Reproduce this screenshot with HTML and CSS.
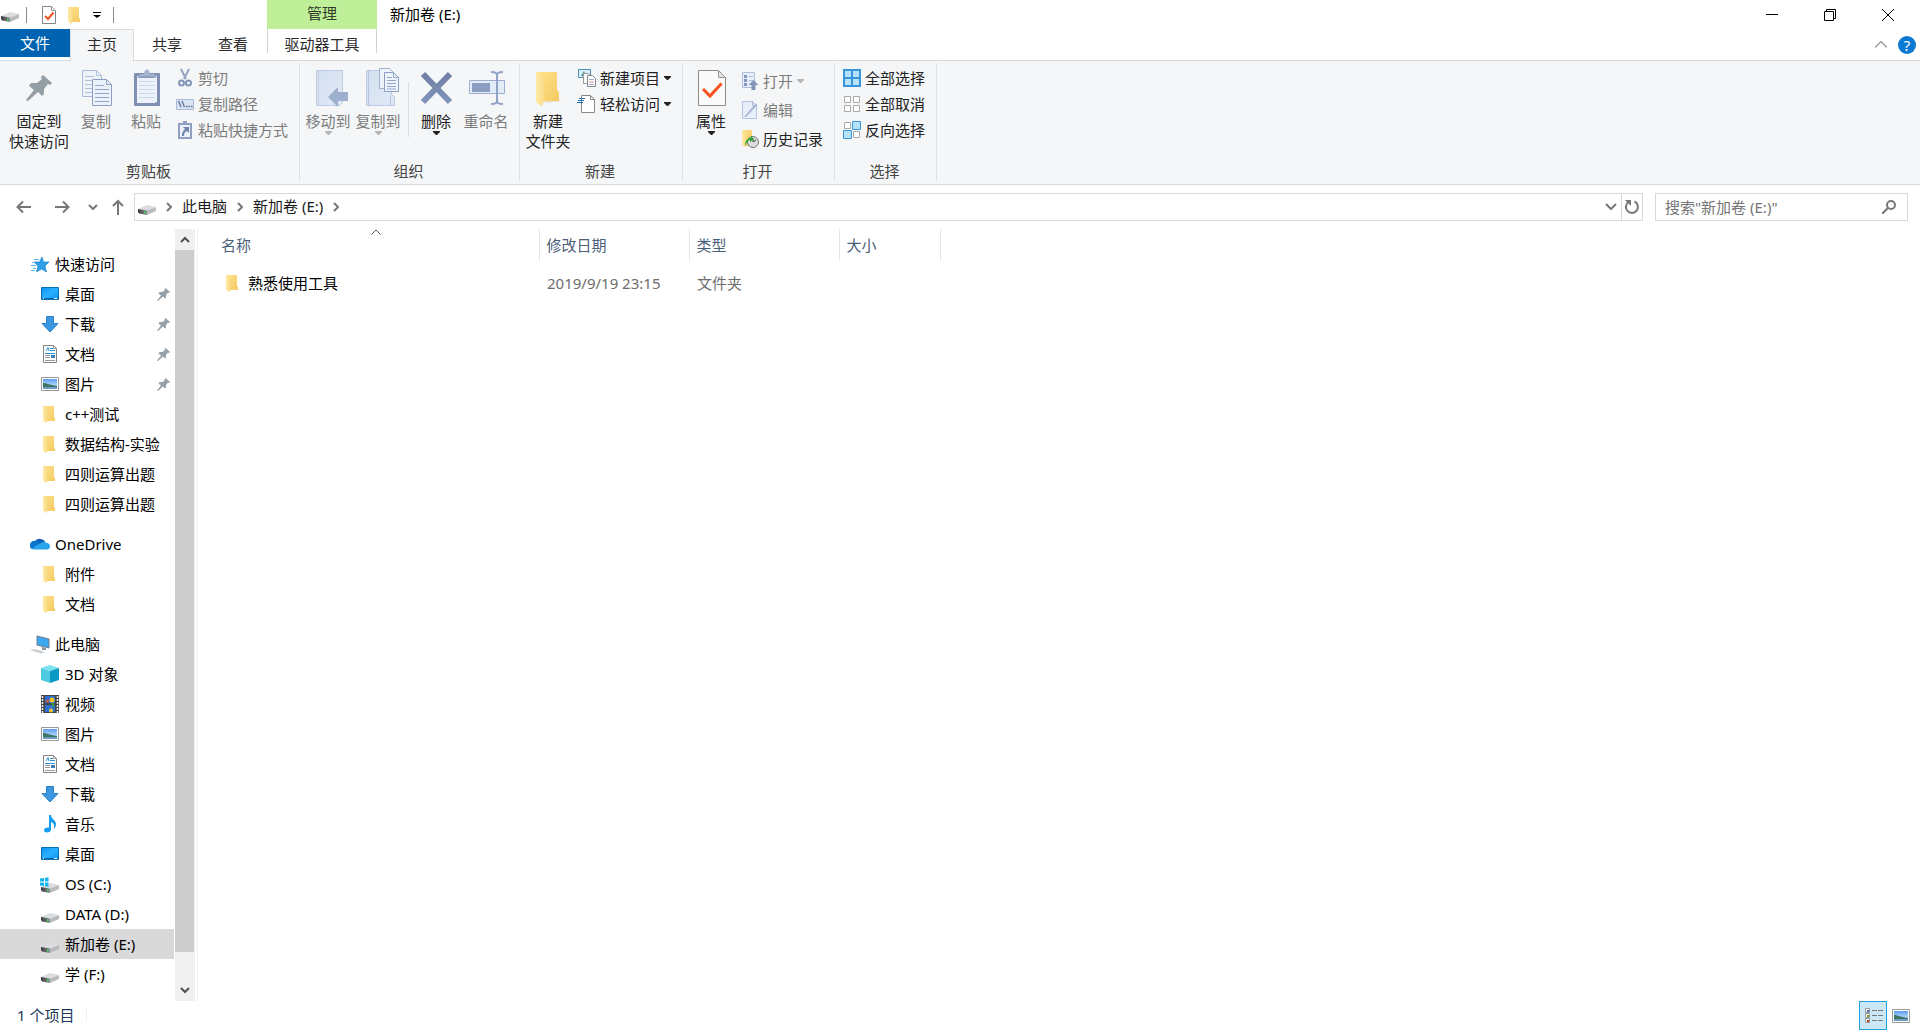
FILE: index.html
```html
<!DOCTYPE html>
<html lang="zh-CN">
<head>
<meta charset="utf-8">
<title>新加卷 (E:)</title>
<link rel="stylesheet" href="styles.css">
</head>
<body>
<svg class="defs" aria-hidden="true">
  <defs>
    <linearGradient id="g-folder" x1="0" y1="0" x2="1" y2="1"><stop offset="0" stop-color="#ffe08a"/><stop offset="1" stop-color="#f3cb62"/></linearGradient>
    <linearGradient id="g-flap" x1="0" y1="0" x2="1" y2="0"><stop offset="0" stop-color="#ffeaa5"/><stop offset="1" stop-color="#f9dc88"/></linearGradient>
    <linearGradient id="g-desk" x1="0" y1="0" x2="1" y2="1"><stop offset="0" stop-color="#0f95f5"/><stop offset=".5" stop-color="#2bb0ff"/><stop offset="1" stop-color="#0a95f8"/></linearGradient>
    <linearGradient id="g-drive" x1="0" y1="0" x2="1" y2="0"><stop offset="0" stop-color="#3a3a3c"/><stop offset="1" stop-color="#8d8f92"/></linearGradient>
    <linearGradient id="g-x" x1="0" y1="0" x2="0" y2="1"><stop offset="0" stop-color="#6f80a4"/><stop offset="1" stop-color="#8093b8"/></linearGradient>
    <linearGradient id="g-pale" x1="0" y1="0" x2="1" y2="1"><stop offset="0" stop-color="#d4e0f0"/><stop offset="1" stop-color="#e0e9f6"/></linearGradient>
    <linearGradient id="g-sky" x1="0" y1="0" x2="0" y2="1"><stop offset="0" stop-color="#5b9df0"/><stop offset="1" stop-color="#e4f3fb"/></linearGradient>
  </defs>
  <symbol id="i-drive" viewBox="0 0 18 18">
    <path d="M0 12 9 8l9 2-9 3.500z" fill="#dcdde0"/><path d="M0 12l9 1.500V18l-8-1.500L0 15z" fill="url(#g-drive)"/><path d="M9 13.500l9-3.500v4l-9 4z" fill="#b9bbbf"/><path d="M6 14.500h1.500v2H6z" fill="#2fe04a"/>
  </symbol>
  <symbol id="i-osdrive" viewBox="0 0 18 18">
    <path d="M0 12 9 8l9 2-9 3.500z" fill="#dcdde0"/><path d="M0 12l9 1.500V18l-8-1.500L0 15z" fill="url(#g-drive)"/><path d="M9 13.500l9-3.500v4l-9 4z" fill="#b9bbbf"/>
    <path d="M-1 3.500 3 3v3.500h-4zM4 2.800 7.500 2.300v4.200H4zM-1 7.500h4V11l-4-.5zM4 7.500h3.500v4.200L4 11.200z" fill="#12b7f0"/><path d="M6 14.500h1.500v2H6z" fill="#2fe04a"/>
  </symbol>
  <symbol id="i-folder" viewBox="0 0 18 18">
    <path d="M3 1h10v11l1 1v3H5z" fill="url(#g-folder)"/><path d="M2 1h1l3 2.500V18l-4-2z" fill="url(#g-flap)"/>
  </symbol>
  <symbol id="i-folder-lg" viewBox="0 0 36 38">
    <path d="M14 31h15l3 1-17 2z" fill="#e6e2d6"/><path d="M8 3h19v18l2 2v9H11z" fill="url(#g-folder)"/><path d="M6 3h1l7 5.500V31l-2 6.500-6-4.500z" fill="url(#g-flap)"/>
  </symbol>
  <symbol id="i-check" viewBox="0 0 18 18">
    <path d="M2.500.5h9l4 4v13h-13z" fill="#fff" stroke="#858585"/><path d="M11.500.5v4h4" fill="#eee" stroke="#999"/><path d="M5 10l3 3 5.500-6.500" fill="none" stroke="#f4511e" stroke-width="2"/>
  </symbol>
  <symbol id="i-props" viewBox="0 0 36 38">
    <path d="M5.500 1.500h20l7 7v28h-27z" fill="#fafafa" stroke="#8c8c8c"/><path d="M25.500 1.500v7h7z" fill="#e2e2e2" stroke="#9a9a9a"/><path d="M10 20l7 7 11.500-12.500" fill="none" stroke="#f4511e" stroke-width="3"/>
  </symbol>
  <symbol id="i-pin" viewBox="0 0 26 26">
    <path d="M17 0l9 8-2 2-2-1-4 5v5l-2 2-4-4-10 9-2-1 8-10-5-4 2-3h6l5-4-1-2z"/>
  </symbol>
  <symbol id="i-copy" viewBox="0 0 36 38">
    <path d="M4.500 1.500h14l5 5v21h-19z" fill="#eef3fb" stroke="#a9bbda"/><path d="M18.500 1.500v5h5M7 7.500h9M7 11.500h14M7 15.500h14M7 19.500h14M7 23.500h14" fill="none" stroke="#b3c3de"/>
    <path d="M14.500 10.500h14l5 5v21h-19z" fill="#eaf1fb" stroke="#8c9ec1"/><path d="M28.500 10.500v5h5M17 16.500h9M17 20.500h14M17 24.500h14M17 28.500h14M17 32.500h14" fill="none" stroke="#93a6c8"/>
  </symbol>
  <symbol id="i-paste" viewBox="0 0 36 38">
    <rect x="6" y="4" width="26" height="33" rx="1" fill="#7f90b3"/><path d="M9 7h20v26l-3 1H9z" fill="#edf2fb"/><path d="M11 12.500h16M11 16.500h16M11 20.500h16M11 24.500h16M11 28.500h16" stroke="#cbd6e8"/><path d="M12 5h4c0-6 6-6 6 0h4l3 4H9z" fill="#a5b4d0"/><path d="M11 8h16" stroke="#7789ae"/>
  </symbol>
  <symbol id="i-cut" viewBox="0 0 18 18">
    <path d="M5 0l5 10M13 0 8 10" stroke="#93a3c2" stroke-width="2"/><circle cx="5.500" cy="14" r="2.500" fill="none" stroke="#8295bb" stroke-width="2"/><circle cx="12.500" cy="14" r="2.500" fill="none" stroke="#8295bb" stroke-width="2"/>
  </symbol>
  <symbol id="i-path" viewBox="0 0 18 18">
    <path d="M.5 4.500h17v10H.5z" fill="#d9e4f3" stroke="#a9bbd9"/><path d="M2.500 6l2.500 6M6 6l2.500 6M10 11.500h1.500M12.500 11.500H14M15 11.500h1.500" stroke="#5f7194" stroke-width="1.300"/>
  </symbol>
  <symbol id="i-shortcut" viewBox="0 0 18 18">
    <path d="M2 2h5V0h4v2h5v16H2z" fill="#8fa0c2"/><path d="M4 4h10v12H4z" fill="#edf2fa"/><path d="M7 6h6v6l-2-2c-2 1-3 2-3 5H6c-.500-3 1-5 3-7z" fill="#6f84af"/>
  </symbol>
  <symbol id="i-move" viewBox="0 0 36 38">
    <path d="M6.500 1.500h26v32l-3 3h-23z" fill="url(#g-pale)" stroke="#bccbe1"/><path d="M8.500 2v34" stroke="#c6d3e7"/><path d="M18 28l10-10v5h10v9H28v6z" fill="#9fb0cf"/>
  </symbol>
  <symbol id="i-copyto" viewBox="0 0 36 38">
    <path d="M6.500 1.500h25v24l3 2v9h-28z" fill="url(#g-pale)" stroke="#bccbe1"/><path d="M8.500 2v34M30.500 36V26" stroke="#b4c4de"/>
    <path d="M19.500-.5h10l4 4v16h-14z" fill="#eef3fb" stroke="#a0b1cf"/><path d="M24.500 3.500h9l5 5v14h-14z" fill="#edf3fc" stroke="#8c9ec1"/><path d="M33.500 3.500v5h5M27 8.500h5M27 11.500h9M27 14.500h9M27 17.500h9M27 20h9" fill="none" stroke="#93a6c8"/>
  </symbol>
  <symbol id="i-delete" viewBox="0 0 36 38"><path d="M5 5l27 28M32 5 5 33" stroke="url(#g-x)" stroke-width="6"/></symbol>
  <symbol id="i-rename" viewBox="0 0 36 38">
    <path d="M1.500 11.500h35v13h-35z" fill="#e3ecf9" stroke="#9dafd0"/><path d="M4 14h18v9H4z" fill="#8b9dc1"/><path d="M23 3c4 0 6 1 6 3 0-2 2-3 6-3M29 5v28M23 35c4 0 6-1 6-3 0 2 2 3 6 3" fill="none" stroke="#92a4c6" stroke-width="2"/>
  </symbol>
  <symbol id="i-newitem" viewBox="0 0 18 18">
    <path d="M.5.500h12v8H.5z" fill="#d9eefb" stroke="#4a93b4"/><path d="M3 7l3-5 2 5z" fill="#3a8f8a"/><path d="M5.500 4.500h5l3 3v7h-8z" fill="#fafafa" stroke="#9a9a9a"/><path d="M9.500 6.500h5l3 3v8h-8z" fill="#fff" stroke="#888"/><path d="M11 10.500h5M11 15.500h5" stroke="#8fb1dd"/><path d="M11 13h5" stroke="#e58a90"/>
  </symbol>
  <symbol id="i-easy" viewBox="0 0 18 18">
    <path d="M3.500.5h9l4 4v13h-13z" fill="#fff" stroke="#888"/><path d="M12.500.5v4h4" fill="none" stroke="#888"/><path d="M1 3.500h6M0 5.500h6M-1 7.500h6" stroke="#2475b8" stroke-width="1.200"/>
  </symbol>
  <symbol id="i-open" viewBox="0 0 18 18">
    <path d="M1.500.5h12v15h-12z" fill="#e6eefa" stroke="#b1c0da"/><path d="M3 3h3v3H3zM3 7h3v3H3zM3 11h3v3H3z" fill="#8497bc"/><path d="M8 4.500h4M8 8.500h4" stroke="#b0bed6"/><path d="M12.500 8l5 5h-3v5h-4v-5h-3z" fill="#8395b9"/>
  </symbol>
  <symbol id="i-edit" viewBox="0 0 18 18">
    <path d="M1.500.5h10l4 4v13h-14z" fill="#e8effa" stroke="#b5c4de"/><path d="M11.500.5v4h4" fill="none" stroke="#a6b6d2"/><path d="M3 16 14.500 2.500l2 1.500L5 16z" fill="#a5b5d2"/>
  </symbol>
  <symbol id="i-history" viewBox="0 0 18 18">
    <path d="M1 0h10v16H4z" fill="url(#g-folder)"/><path d="M1 0l4 3v14l-4-2z" fill="url(#g-flap)"/><circle cx="12" cy="12" r="5.500" fill="#dcdcdc" stroke="#777"/><path d="M12 9v3l3-2" stroke="#444" fill="none"/><path d="M4 16c0-6 3-8 6-8V6l3 3-4 3v-2c-2 0-3 2-5 6z" fill="#27a838"/>
  </symbol>
  <symbol id="i-selall" viewBox="0 0 18 18"><path d="M1 1h16v16H1zM9 1v16M1 9h16" fill="#b5e1fb" stroke="#3795dc" stroke-width="2"/></symbol>
  <symbol id="i-selnone" viewBox="0 0 18 18"><path d="M1.500 1.500h6v6h-6zM10.500 1.500h6v6h-6zM1.500 10.500h6v6h-6zM10.500 10.500h6v6h-6z" fill="#fff" stroke="#aaa"/></symbol>
  <symbol id="i-selinv" viewBox="0 0 18 18"><path d="M1.500 1.500h6v6h-6zM10.500 10.500h6v6h-6z" fill="#fff" stroke="#aaa"/><path d="M9.500.5h8v8h-8zM.5 9.500h8v8h-8z" fill="#b5e1fb" stroke="#3795dc"/></symbol>
  <symbol id="i-star" viewBox="0 0 18 18">
    <path d="M11 2l1.500 5H18l-4 4 1.500 6-5-3-5 3L7 11 3 7h5.500z" fill="#2d9fe8" stroke="#1c86cc" stroke-width=".7"/><path d="M3 4.500h5M1 7.500h3M0 10.500h5M2 13.500h3M0 15.500h4" stroke="#63bdf2"/>
  </symbol>
  <symbol id="i-desktop" viewBox="0 0 18 18"><path d="M.5 2.500h17v12H.5z" fill="url(#g-desk)" stroke="#0b6fb5"/><path d="M1 13.500h16" stroke="#0a5fa5"/><path d="M2 13.500h1M13 13.500h3" stroke="#fff"/></symbol>
  <symbol id="i-down" viewBox="0 0 18 18"><path d="M5.500 1.500h7v7h4.500l-8 8.500-8-8.500h4.500z" fill="#3c97e2" stroke="#2c80c6"/></symbol>
  <symbol id="i-doc" viewBox="0 0 18 18">
    <path d="M2.500.5h10l3 3v14h-13z" fill="#fff" stroke="#858585"/><path d="M12.500.5v3h3" fill="none" stroke="#999"/><path d="M5 6l2-3.500L8 6M9 3.500h3M9 5.500h5M4 8.500h10" stroke="#2e94d8" fill="none"/><path d="M4 10.500h5M4 12.500h5M4 15.500h10" stroke="#9a9a9a"/><path d="M10 10h4v3h-4z" fill="#3c7fb8"/>
  </symbol>
  <symbol id="i-pic" viewBox="0 0 18 18">
    <path d="M.5 2.500h17v13H.5z" fill="#fff" stroke="#999"/><path d="M2 4h14v10H2z" fill="url(#g-sky)"/><path d="M2 8c4 0 6 2 14 3v1H2z" fill="#3c7566"/><path d="M2 12h14v2H2z" fill="#6b9dc0"/>
  </symbol>
  <symbol id="i-cloud" viewBox="0 0 20 18">
    <path d="M5 6a6 5 0 0 1 10.500 1L9 12z" fill="#0f5fb8"/><path d="M0 11a4 4.500 0 0 1 5-5c3 0 5 2 10 8H3.500C1.500 14 0 13.500 0 11z" fill="#0b74cf"/><path d="M2 14c3-3 7-5 9-6 3-2 4-1 4.500-.5C19 8 20 9.500 20 11.500s-1.500 3-3 3H4z" fill="#29a4ea"/>
  </symbol>
  <symbol id="i-pc" viewBox="0 0 20 18">
    <path d="M7 1l12 3v9L7 10z" fill="#3aa7f0" stroke="#6e7f90"/><path d="M12 12l4 1v2h-4z" fill="#8b939b"/><path d="M0 15l5-1 10 3-4 1.500z" fill="#c9ced3"/>
  </symbol>
  <symbol id="i-cube" viewBox="0 0 18 18"><path d="M0 3l9-3 9 3-9 3z" fill="#7be3ef"/><path d="M0 3l9 3v12l-9-3z" fill="#4fc9de"/><path d="M18 3 9 6v12l9-3z" fill="#0c98c4"/></symbol>
  <symbol id="i-video" viewBox="0 0 18 18">
    <path d="M0 0h18v18H0z" fill="#444"/><path d="M4 1h10v7H4zM4 10h10v7H4z" fill="#2f6fd0"/><path d="M1.500 1v17M16.500 1v17" stroke="#eee" stroke-width="1.500" stroke-dasharray="2 1"/><circle cx="11" cy="5" r="2.500" fill="#f0c52b"/><circle cx="6.500" cy="6" r="1.500" fill="#e4532f"/><circle cx="10" cy="15.500" r="2" fill="#f0c52b"/><path d="M10 8h3v4h-1z" fill="#3a9a3f"/>
  </symbol>
  <symbol id="i-music" viewBox="0 0 18 18"><path d="M8 0h2c0 4 5 5 5 9 0 2-1 4-2 5 1-5-1-6-3-7v7.500c0 2-2 3-4 3s-3-1-3-2.500 2-3 5-2.500z" fill="#139cf2"/></symbol>
  <symbol id="i-caret" viewBox="0 0 7 4"><path d="M0 0h7v1L4 4H3L0 1z"/></symbol>
</svg>

<header class="titlebar">
  <div class="quick">
    <svg class="ic"><use href="#i-drive" y="-2"/></svg>
    <span class="bar"></span>
    <button class="quick-btn" aria-label="属性"><svg class="ic"><use href="#i-check"/></svg></button>
    <button class="quick-btn" aria-label="新建文件夹"><svg class="ic"><use href="#i-folder"/></svg></button>
    <button class="quick-btn quick-more" aria-label="自定义快速访问工具栏"><svg width="8" height="6" viewBox="0 0 8 6"><path d="M0 0h8v1H0zM0 3h8L4 6z"/></svg></button>
    <span class="bar"></span>
  </div>
  <div class="context">管理</div>
  <h1 class="title">新加卷 (E:)</h1>
  <div class="winbtns">
    <button aria-label="最小化"><svg width="12" height="12"><path d="M0 5.500h12" stroke="#000"/></svg></button>
    <button aria-label="向下还原"><svg width="12" height="12"><path d="M.5 2.500h9v9h-9zM2.500 2.500v-2h9v9h-2" fill="none" stroke="#000"/></svg></button>
    <button aria-label="关闭"><svg width="12" height="12"><path d="M0 0l12 12M12 0 0 12" stroke="#000"/></svg></button>
  </div>
</header>

<nav class="tabs">
  <button class="tab tab-file">文件</button>
  <button class="tab tab-active">主页</button>
  <button class="tab">共享</button>
  <button class="tab">查看</button>
  <button class="tab tab-context">驱动器工具</button>
  <div class="tabs-right">
    <button aria-label="最小化功能区"><svg width="12" height="7"><path d="M0 6.500l6-6 6 6" fill="none" stroke="#a0a0a0" stroke-width="1.500"/></svg></button>
    <button class="help" aria-label="帮助">?</button>
  </div>
</nav>

<section class="ribbon">
  <div class="group g-clip">
    <div class="tools">
      <button class="big wide"><svg class="ic-lg"><use href="#i-pin" x="5" y="6" width="26" height="26" fill="#949ea5"/></svg>固定到<br>快速访问</button>
      <button class="big off"><svg class="ic-lg"><use href="#i-copy"/></svg>复制</button>
      <button class="big off"><svg class="ic-lg"><use href="#i-paste"/></svg>粘贴</button>
      <div class="small-col">
        <button class="small off"><svg class="ic"><use href="#i-cut"/></svg>剪切</button>
        <button class="small off"><svg class="ic"><use href="#i-path"/></svg>复制路径</button>
        <button class="small off"><svg class="ic"><use href="#i-shortcut"/></svg>粘贴快捷方式</button>
      </div>
    </div>
    <div class="group-name">剪贴板</div>
  </div>
  <div class="group g-org">
    <div class="tools">
      <button class="big off"><svg class="ic-lg"><use href="#i-move"/></svg>移动到<svg class="caret"><use href="#i-caret"/></svg></button>
      <button class="big off"><svg class="ic-lg"><use href="#i-copyto"/></svg>复制到<svg class="caret"><use href="#i-caret"/></svg></button>
      <span class="split"></span>
      <button class="big"><svg class="ic-lg"><use href="#i-delete"/></svg>删除<svg class="caret"><use href="#i-caret"/></svg></button>
      <button class="big off"><svg class="ic-lg"><use href="#i-rename"/></svg>重命名</button>
    </div>
    <div class="group-name">组织</div>
  </div>
  <div class="group g-new">
    <div class="tools">
      <button class="big"><svg class="ic-lg"><use href="#i-folder-lg"/></svg>新建<br>文件夹</button>
      <div class="small-col">
        <button class="small"><svg class="ic"><use href="#i-newitem"/></svg>新建项目<svg class="caret"><use href="#i-caret"/></svg></button>
        <button class="small"><svg class="ic"><use href="#i-easy"/></svg>轻松访问<svg class="caret"><use href="#i-caret"/></svg></button>
      </div>
    </div>
    <div class="group-name">新建</div>
  </div>
  <div class="group g-open">
    <div class="tools">
      <button class="big"><svg class="ic-lg"><use href="#i-props"/></svg>属性<svg class="caret"><use href="#i-caret"/></svg></button>
      <div class="small-col loose">
        <button class="small off"><svg class="ic"><use href="#i-open"/></svg>打开<svg class="caret"><use href="#i-caret"/></svg></button>
        <button class="small off"><svg class="ic"><use href="#i-edit"/></svg>编辑</button>
        <button class="small"><svg class="ic"><use href="#i-history"/></svg>历史记录</button>
      </div>
    </div>
    <div class="group-name">打开</div>
  </div>
  <div class="group g-sel">
    <div class="tools">
      <div class="small-col">
        <button class="small"><svg class="ic"><use href="#i-selall"/></svg>全部选择</button>
        <button class="small"><svg class="ic"><use href="#i-selnone"/></svg>全部取消</button>
        <button class="small"><svg class="ic"><use href="#i-selinv"/></svg>反向选择</button>
      </div>
    </div>
    <div class="group-name">选择</div>
  </div>
</section>

<div class="location">
  <div class="history">
    <button class="back" aria-label="后退"><svg width="16" height="16"><path d="M15 8H1.500M7 2.500L1.500 8 7 13.500" class="ln2"/></svg></button>
    <button class="forward" aria-label="前进"><svg width="16" height="16"><path d="M1 8h13.500M9 2.500L14.500 8 9 13.500" class="ln2"/></svg></button>
    <button class="recent" aria-label="最近浏览的位置"><svg width="10" height="6"><path d="M1 1l4 4 4-4" class="ln2"/></svg></button>
    <button class="up" aria-label="上移"><svg width="14" height="16"><path d="M7 16V2M2 7l5-5 5 5" class="ln2"/></svg></button>
  </div>
  <div class="address">
    <svg class="ic"><use href="#i-drive" y="-1"/></svg>
    <svg class="sep" width="6" height="10"><path d="M1 1l4 4-4 4" class="ln2"/></svg>
    <a href="#">此电脑</a>
    <svg class="sep" width="6" height="10"><path d="M1 1l4 4-4 4" class="ln2"/></svg>
    <a href="#">新加卷 (E:)</a>
    <svg class="sep" width="6" height="10"><path d="M1 1l4 4-4 4" class="ln2"/></svg>
    <button class="drop" aria-label="以前的位置"><svg width="12" height="8"><path d="M1 1l5 5 5-5" class="ln2"/></svg></button>
    <button class="refresh" aria-label="刷新"><svg width="16" height="16"><path d="M10.500 2.500a6 6 0 1 1-6 .5" class="ln2"/><path d="M1 1h6v6z" fill="#777"/></svg></button>
  </div>
  <label class="search">
    <input type="search" aria-label="搜索" placeholder='搜索"新加卷 (E:)"'>
    <svg width="14" height="14"><circle cx="9" cy="5" r="4" class="ln2"/><path d="M6 8l-6 6" class="ln2"/></svg>
  </label>
</div>

<main class="main">
  <aside class="side">
    <nav class="tree">
      <ul>
        <li><a href="#" class="root"><svg class="ic"><use href="#i-star"/></svg>快速访问</a></li>
        <li><a href="#"><svg class="ic"><use href="#i-desktop"/></svg>桌面<svg class="pin"><use href="#i-pin"/></svg></a></li>
        <li><a href="#"><svg class="ic"><use href="#i-down"/></svg>下载<svg class="pin"><use href="#i-pin"/></svg></a></li>
        <li><a href="#"><svg class="ic"><use href="#i-doc"/></svg>文档<svg class="pin"><use href="#i-pin"/></svg></a></li>
        <li><a href="#"><svg class="ic"><use href="#i-pic"/></svg>图片<svg class="pin"><use href="#i-pin"/></svg></a></li>
        <li><a href="#"><svg class="ic"><use href="#i-folder"/></svg>c++测试</a></li>
        <li><a href="#"><svg class="ic"><use href="#i-folder"/></svg>数据结构-实验</a></li>
        <li><a href="#"><svg class="ic"><use href="#i-folder"/></svg>四则运算出题</a></li>
        <li><a href="#"><svg class="ic"><use href="#i-folder"/></svg>四则运算出题</a></li>
      </ul>
      <ul>
        <li><a href="#" class="root"><svg class="ic ic-wide"><use href="#i-cloud"/></svg>OneDrive</a></li>
        <li><a href="#"><svg class="ic"><use href="#i-folder"/></svg>附件</a></li>
        <li><a href="#"><svg class="ic"><use href="#i-folder"/></svg>文档</a></li>
      </ul>
      <ul>
        <li><a href="#" class="root"><svg class="ic ic-wide"><use href="#i-pc"/></svg>此电脑</a></li>
        <li><a href="#"><svg class="ic"><use href="#i-cube"/></svg>3D 对象</a></li>
        <li><a href="#"><svg class="ic"><use href="#i-video"/></svg>视频</a></li>
        <li><a href="#"><svg class="ic"><use href="#i-pic"/></svg>图片</a></li>
        <li><a href="#"><svg class="ic"><use href="#i-doc"/></svg>文档</a></li>
        <li><a href="#"><svg class="ic"><use href="#i-down"/></svg>下载</a></li>
        <li><a href="#"><svg class="ic"><use href="#i-music"/></svg>音乐</a></li>
        <li><a href="#"><svg class="ic"><use href="#i-desktop"/></svg>桌面</a></li>
        <li><a href="#"><svg class="ic"><use href="#i-osdrive"/></svg>OS (C:)</a></li>
        <li><a href="#"><svg class="ic"><use href="#i-drive"/></svg>DATA (D:)</a></li>
        <li><a href="#" class="current"><svg class="ic"><use href="#i-drive"/></svg>新加卷 (E:)</a></li>
        <li><a href="#"><svg class="ic"><use href="#i-drive"/></svg>学 (F:)</a></li>
      </ul>
    </nav>
    <div class="scroll">
      <button aria-label="向上滚动"><svg width="10" height="7"><path d="M1 6l4-4 4 4" class="arrow"/></svg></button>
      <div class="thumb"></div>
      <button class="scroll-down" aria-label="向下滚动"><svg width="10" height="7"><path d="M1 1l4 4 4-4" class="arrow"/></svg></button>
    </div>
  </aside>
  <section class="files">
    <table>
      <thead>
        <tr>
          <th class="c-name" aria-sort="ascending">名称<svg class="sort" width="10" height="6"><path d="M.5 5.500L5 1l4.500 4.500" fill="none" stroke="#555"/></svg></th>
          <th class="c-mid">修改日期</th>
          <th class="c-mid">类型</th>
          <th class="c-size">大小</th>
        </tr>
      </thead>
      <tbody>
        <tr>
          <td class="f-name"><a href="#"><svg class="ic"><use href="#i-folder"/></svg>熟悉使用工具</a></td>
          <td>2019/9/19 23:15</td>
          <td>文件夹</td>
          <td></td>
        </tr>
      </tbody>
    </table>
  </section>
</main>

<footer class="status">
  <span class="count">1 个项目</span>
  <div class="views">
    <button class="on" aria-label="详细信息"><svg width="20" height="18"><path d="M2.500 1.500h4v4h-4zM2.500 6.500h4v4h-4zM2.500 11.500h4v4h-4z" fill="#fff" stroke="#999"/><path d="M4 3h2v2H4z" fill="#3a77b8"/><path d="M4 8h2v2H4z" fill="#7c9a2d"/><path d="M4 13h2v2H4z" fill="#c8361d"/><path d="M9 3.500h5M15 3.500h5M9 8.500h5M15 8.500h5M9 13.500h5M15 13.500h5" stroke="#777"/></svg></button>
    <button aria-label="大图标"><svg class="ic"><use href="#i-pic"/></svg></button>
  </div>
</footer>
</body>
</html>
```
FILE: styles.css
```css
* { box-sizing: border-box; }

body {
  margin: 0;
  min-height: 100vh;
  display: flex;
  flex-direction: column;
  background: #fff;
  color: #000;
  font: 400 15px/20px "Noto Sans", "Noto Sans CJK SC", sans-serif;
}

button {
  margin: 0;
  padding: 0;
  border: 0;
  background: none;
  color: inherit;
  font: inherit;
  display: flex;
  align-items: center;
  justify-content: center;
}

a { color: inherit; text-decoration: none; }
svg { display: block; flex: none; }
symbol { overflow: visible; }

.defs { position: absolute; width: 0; height: 0; }
.ic { width: 18px; height: 18px; overflow: visible; }
.ic-wide { width: 20px; }
.ic-lg { width: 36px; height: 38px; overflow: visible; margin-bottom: 4px; }
.caret { width: 7px; height: 4px; fill: #222; }
.ln2 { fill: none; stroke: #777; stroke-width: 2; }

/* Title bar */
.titlebar { display: flex; height: 29px; }
.quick { display: flex; align-items: center; width: 267px; padding-left: 1px; }
.bar { width: 1px; height: 16px; background: #888; margin: 0 9px 0 7px; }
.quick-btn { width: 26px; height: 24px; }
.quick-more { width: 18px; }
.context {
  width: 110px;
  padding-top: 3px;
  background: #c0ef9a;
  color: #2f3b26;
  text-align: center;
}
.title { flex: 1; margin: 0; padding: 4px 0 0 13px; font-size: 15px; font-weight: inherit; }
.winbtns { display: flex; padding-right: 3px; }
.winbtns button { width: 58px; }

/* Ribbon tabs */
.tabs {
  display: flex;
  height: 32px;
  border-bottom: 1px solid #d9dadc;
  color: #2b2b2b;
}
.tab { width: 66px; height: 30px; }
.tab-file { width: 70px; height: 28px; background: #0063b1; color: #fff; }
.tab-active {
  width: 64px;
  height: 32px;
  padding-bottom: 3px;
  border: 1px solid #d9dadc;
  border-bottom: 0;
  background: #f5f6f7;
}
.tab-context {
  width: 110px;
  height: 24px;
  padding-top: 6px;
  margin-left: 1px;
  border: solid #d0d0d0;
  border-width: 0 1px;
}
.tabs-right { display: flex; align-items: center; gap: 11px; margin-left: auto; padding-right: 4px; }
.help {
  width: 18px;
  height: 18px;
  border-radius: 50%;
  background: #0b78d4;
  color: #fff;
}

/* Ribbon */
.ribbon {
  display: flex;
  height: 124px;
  padding: 2px 0 3px;
  background: #f5f6f7;
  border-bottom: 1px solid #d9dadc;
  color: #222;
}
.group {
  display: flex;
  flex-direction: column;
  justify-content: space-between;
  border-right: 1px solid #e0e1e3;
}
.g-clip { width: 300px; }
.g-org { width: 220px; }
.g-new { width: 163px; }
.g-open { width: 152px; }
.g-sel { width: 102px; }
.group-name { padding-right: 2px; color: #444; text-align: center; }
.tools { display: flex; padding-left: 3px; }
.g-clip .tools { padding-left: 7px; }
.big {
  flex-direction: column;
  justify-content: flex-start;
  width: 50px;
  padding-top: 6px;
  white-space: nowrap;
}
.wide { width: 64px; }
.off { color: #7c7c7c; }
.off .caret { fill: #b5b5b5; }
.split { width: 1px; height: 55px; margin: 19px 2px 0 5px; background: #dcdde0; }
.small-col { display: flex; flex-direction: column; gap: 6px; padding: 5px 0 0 5px; }
.loose { gap: 9px; padding-top: 8px; }
.small { justify-content: flex-start; gap: 4px; white-space: nowrap; }

/* Location row */
.location { display: flex; align-items: center; height: 44px; padding: 0 12px; }
.history { display: flex; width: 122px; }
.history button { height: 28px; justify-content: flex-start; padding-left: 4px; }
.history .back { width: 38px; }
.history .forward { width: 34px; }
.history .recent { width: 23px; }
.history .up { width: 27px; }
.address {
  display: flex;
  align-items: center;
  flex: 1;
  height: 28px;
  border: 1px solid #d9d9d9;
  padding-left: 3px;
  color: #1a1a1a;
}
.address a { padding-bottom: 2px; }
.sep { margin: 0 10px; }
.drop { width: 20px; height: 26px; margin-left: auto; }
.refresh { width: 21px; height: 26px; border-left: 1px solid #d9d9d9; }
.search {
  display: flex;
  align-items: center;
  width: 253px;
  height: 28px;
  margin-left: 12px;
  padding: 0 11px 0 9px;
  border: 1px solid #d9d9d9;
}
.search input {
  flex: 1;
  min-width: 0;
  padding: 0;
  border: 0;
  background: none;
  font: inherit;
  outline: 0;
}
.search input::placeholder { color: #757575; }

/* Navigation pane */
.main { display: flex; flex: 1; }
.side { display: flex; width: 198px; border-right: 1px solid #f0f0f0; }
.tree { width: 174px; padding-top: 20px; }
.tree ul { margin: 0 0 10px; padding: 0; list-style: none; }
.tree a {
  display: flex;
  align-items: center;
  height: 30px;
  padding: 0 4px 0 41px;
  gap: 6px;
  white-space: nowrap;
}
.tree .root { padding-left: 31px; }
.tree .root .ic-wide { margin: 0 -1px; }
.tree .current { background: #d9d9d9; }
.pin { width: 13px; height: 13px; margin-left: auto; fill: #96a0a8; }
.scroll {
  display: flex;
  flex-direction: column;
  width: 20px;
  margin-left: 1px;
  background: #f0f0f0;
}
.scroll button { height: 21px; }
.scroll .scroll-down { height: 22px; }
.thumb { flex: 1; margin: 0 1px 27px 0; background: #cdcdcd; }
.arrow { fill: none; stroke: #505050; stroke-width: 2; }

/* File list */
.files { flex: 1; padding-left: 15px; }
.files table { border-collapse: collapse; table-layout: fixed; width: 727px; }
.files th {
  position: relative;
  height: 32px;
  padding: 0 0 0 7px;
  border-right: 1px solid #e5e5e5;
  color: #4c607a;
  font-weight: inherit;
  text-align: left;
}
.files .c-name { width: 326px; padding-left: 8px; }
.c-mid { width: 150px; }
.c-size { width: 101px; }
.sort { position: absolute; top: 0; left: 158px; }
.files td { height: 37px; padding: 7px 0 0 8px; color: #6d6d6d; }
.files .f-name { padding-left: 11px; color: #000; }
.f-name a { display: flex; align-items: center; gap: 6px; }

/* Status bar */
.status { display: flex; height: 29px; align-items: center; color: #1e395b; }
.count { padding: 0 12px 0 17px; margin-bottom: 2px; border-right: 1px solid #f0f0f0; line-height: 14px; }
.views { display: flex; gap: 5px; margin-left: auto; padding-right: 10px; }
.views .on { width: 28px; height: 29px; border: 1px solid #26a0da; background: #cbe8f6; }
```
